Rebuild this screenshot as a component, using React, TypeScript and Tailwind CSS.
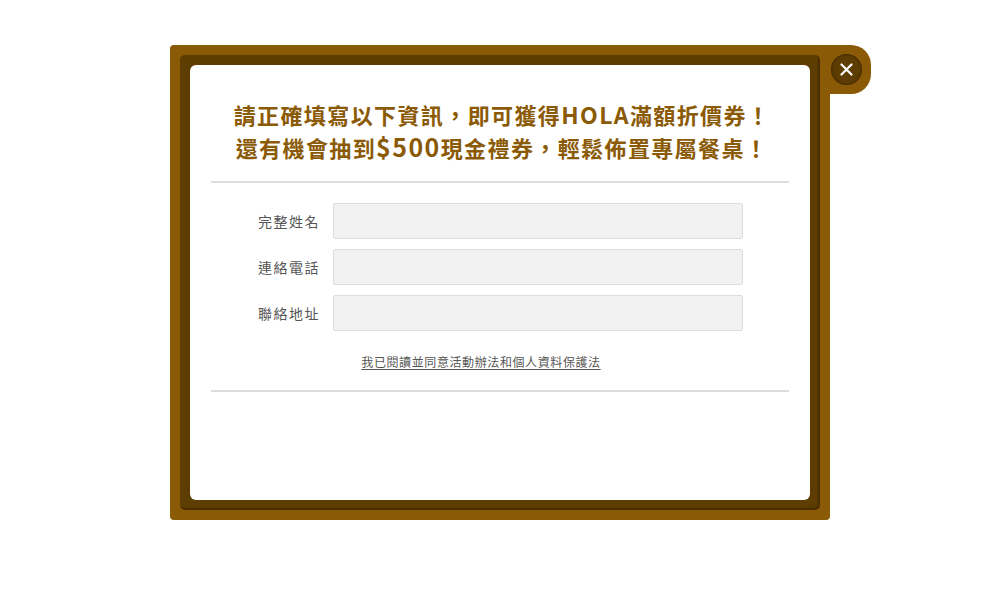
import React from "react";

export default function App() {
  const fields = ["完整姓名", "連絡電話", "聯絡地址"];
  return (
    <div
      className="w-[1000px] h-[600px] bg-white relative"
      style={{ fontFamily: '"Noto Sans CJK TC", "Noto Sans", sans-serif' }}
    >
      <div className="absolute left-[170px] top-[45px] flex">
        <div className="w-[660px] h-[475px] bg-[#8b5a06] rounded-[4px] rounded-tr-none p-[10px]">
          <div className="w-full h-full bg-[#5e3d02] rounded-[5px] p-[10px] shadow-[inset_-2px_-2px_2px_rgba(0,0,0,0.25)]">
            <div className="w-full h-full bg-white rounded-[6px] px-[21px] pt-[33px] flex flex-col">
              <div className="text-center text-[22px] leading-[32px] font-bold tracking-[1.4px] text-[#8b5a06] pl-[4px]">
                <div>
                  請正確填寫以下資訊，即可獲得<span className="text-[23px]">HOLA</span>滿額折價券！
                </div>
                <div>
                  還有機會抽到<span className="text-[25px]">$500</span>現金禮券，輕鬆佈置專屬餐桌！
                </div>
              </div>
              <div className="mt-[18px] h-[2px] bg-[#dddddd]" />
              <div className="pt-[20px] flex flex-col gap-[10px] pl-[22px]">
                {fields.map((f) => (
                  <div key={f} className="flex items-center">
                    <div className="w-[100px] pr-[13px] text-right text-[14px] tracking-[1.5px] text-[#555555]">
                      {f}
                    </div>
                    <div className="w-[410px] h-[36px] bg-[#f2f2f2] border border-[#dddddd] rounded-[2px]" />
                  </div>
                ))}
              </div>
              <div className="mt-[17px] text-center pr-[38px]">
                <span className="text-[12px] leading-[20px] tracking-[0.6px] text-[#555555] underline underline-offset-[2px]">
                  我已閱讀並同意活動辦法和個人資料保護法
                </span>
              </div>
              <div className="mt-[18px] h-[2px] bg-[#dddddd]" />
            </div>
          </div>
        </div>
        <div className="w-[41px] h-[49px] bg-[#8b5a06] rounded-r-[20px] flex items-center justify-start">
          <div className="ml-[1px] -mt-[1px] w-[31px] h-[31px] rounded-full bg-[#5e3d02] shadow-[inset_0_0_3px_rgba(0,0,0,0.6)] flex items-center justify-center">
            <svg width="13" height="13" viewBox="0 0 13 13">
              <path d="M1.5 1.5 L11.5 11.5 M11.5 1.5 L1.5 11.5" stroke="white" strokeWidth="2.2" strokeLinecap="round" />
            </svg>
          </div>
        </div>
      </div>
    </div>
  );
}
